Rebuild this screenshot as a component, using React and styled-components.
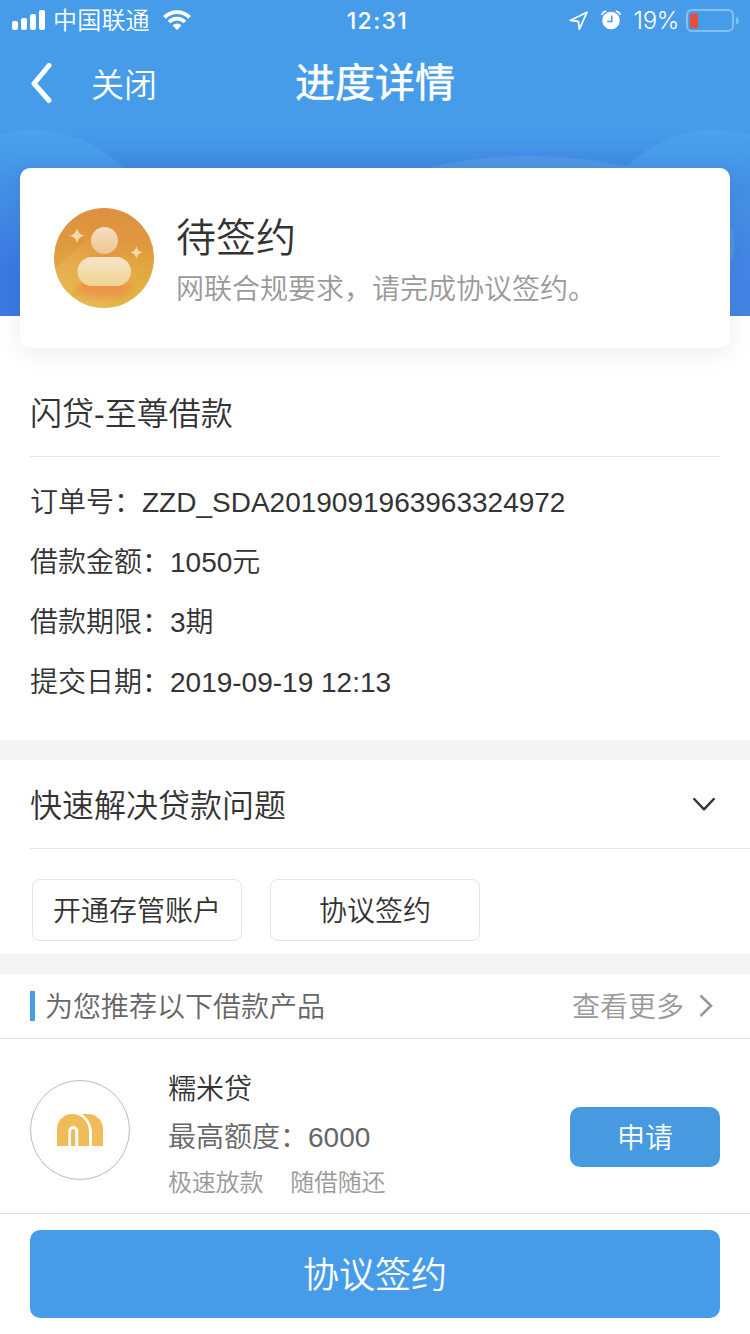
import React from "react";
import styled, { createGlobalStyle, css } from "styled-components";

const GlobalStyle = createGlobalStyle`
  * {
    box-sizing: border-box;
  }
  body {
    margin: 0;
    background: #fff;
    color: #333;
    font-family: "Liberation Sans", "Noto Sans CJK SC", sans-serif;
    font-weight: 350;
  }
  svg {
    display: block;
    flex: none;
  }
`;

const Page = styled.div`
  position: relative;
  display: flex;
  flex-direction: column;
  width: 750px;
  height: 1334px;
  overflow: hidden;
`;

const Backdrop = styled.svg`
  position: absolute;
  top: 0;
  left: 0;
  z-index: -1;
`;

const StatusBar = styled.div`
  display: grid;
  grid-template-columns: 1fr auto 1fr;
  align-items: center;
  height: 40px;
  padding: 0 11px 0 12px;
  color: #fff;
  font-family: Inter, "Noto Sans CJK SC", sans-serif;
`;

const StatusGroup = styled.div`
  display: flex;
  align-items: center;
  justify-content: ${props => (props.$end ? "flex-end" : "flex-start")};
`;

const Carrier = styled.span`
  font-size: 24px;
  line-height: 38px;
  letter-spacing: 0.2px;
  padding-top: 2px;
  margin: 0 13px 0 7px;
`;

const Clock = styled.span`
  font-size: 23px;
  font-weight: 500;
  letter-spacing: 1.4px;
  line-height: 38px;
  padding: 2px 0 0 4px;
`;

const Percent = styled.span`
  font-size: 24px;
  font-weight: 350;
  line-height: 38px;
  letter-spacing: -0.3px;
  padding-top: 2px;
  margin: 0 7px 0 13px;
`;

const NavBar = styled.div`
  display: grid;
  grid-template-columns: 1fr auto 1fr;
  align-items: center;
  height: 88px;
  padding: 0 30px;
  color: #fff;
`;

const NavLeft = styled.div`
  display: flex;
  align-items: center;
  gap: 38px;
  font-size: 33px;
  line-height: 80px;

  span {
    padding-top: 4px;
  }
`;

const Title = styled.div`
  font-size: 40px;
  font-weight: 400;
  line-height: 86px;
  height: 88px;
  -webkit-text-stroke: 0.5px #fff;
`;

const StatusCard = styled.div`
  display: flex;
  gap: 22px;
  height: 180px;
  margin: 40px 20px 0;
  padding: 40px 34px;
  border-radius: 10px;
  background: #fff;
  box-shadow: 0 4px 24px rgba(0, 0, 0, 0.08);
`;

const StatusText = styled.div`
  display: flex;
  flex-direction: column;
`;

const StatusTitle = styled.div`
  font-size: 40px;
  line-height: 61px;
`;

const StatusNote = styled.div`
  font-size: 28px;
  line-height: 42px;
  color: #999;
`;

const Loan = styled.div`
  height: 392px;
  padding: 20px 30px 0;
`;

const LoanName = styled.div`
  height: 89px;
  border-bottom: 1px solid #e3e3e3;
  font-size: 32px;
  line-height: 93px;
`;

const LoanInfo = styled.div`
  padding-top: 16px;
`;

const InfoRow = styled.div`
  display: flex;
  height: 60px;
  font-size: 28px;
  line-height: 60px;
`;

const Spacer = styled.div`
  height: 20px;
  background: #f4f4f4;
`;

const QuickHead = styled.div`
  display: flex;
  align-items: center;
  justify-content: space-between;
  height: 89px;
  margin-left: 30px;
  padding-right: 34px;
  border-bottom: 1px solid #e3e3e3;
  font-size: 32px;
  line-height: 40px;

  span {
    padding-top: 4px;
  }
`;

const QuickList = styled.div`
  display: flex;
  gap: 28px;
  height: 105px;
  padding: 30px 32px 0;
`;

const buttonReset = css`
  padding: 0;
  border: 0;
  font-family: inherit;
  font-weight: inherit;
`;

const QuickButton = styled.button`
  ${buttonReset}
  width: 210px;
  height: 62px;
  padding-bottom: 3px;
  border: 1px solid #e3e3e3;
  border-radius: 8px;
  background: #fff;
  color: #333;
  font-size: 28px;
`;

const RecommendHead = styled.div`
  display: flex;
  align-items: center;
  height: 65px;
  padding: 0 37px 0 30px;
  border-bottom: 1px solid #e0e0e0;
  font-size: 28px;
  line-height: 40px;
  color: #666;

  span {
    padding-top: 4px;
  }
`;

const Mark = styled.i`
  width: 5px;
  height: 30px;
  margin-right: 10px;
  background: #479de8;
`;

const More = styled.div`
  display: flex;
  align-items: center;
  gap: 15px;
  margin-left: auto;
  color: #999;
`;

const Product = styled.div`
  display: flex;
  align-items: center;
  height: 175px;
  padding: 0 30px;
  border-bottom: 1px solid #e0e0e0;
`;

const Logo = styled.div`
  display: flex;
  align-items: center;
  justify-content: center;
  width: 100px;
  height: 100px;
  margin-top: 8px;
  border: 1px solid #bbb;
  border-radius: 50%;
`;

const ProductText = styled.div`
  flex: 1;
  margin: 17px 0 0 38px;
`;

const ProductName = styled.div`
  font-size: 28px;
  line-height: 50px;
`;

const Quota = styled.div`
  font-size: 28px;
  line-height: 46px;
  color: #666;
`;

const Tags = styled.div`
  display: flex;
  gap: 27px;
  font-size: 24px;
  line-height: 44px;
  letter-spacing: -0.2px;
  color: #999;
`;

const ApplyButton = styled.button`
  ${buttonReset}
  width: 150px;
  height: 60px;
  margin-top: 22px;
  padding-bottom: 3px;
  border-radius: 10px;
  background: #479ae0;
  color: #fff;
  font-size: 28px;
`;

const Footer = styled.div`
  padding: 16px 30px;
`;

const SignButton = styled.button`
  ${buttonReset}
  width: 100%;
  height: 88px;
  padding-bottom: 5px;
  border-radius: 10px;
  background: #479cea;
  color: #fff;
  font-size: 36px;
`;

const HeaderBackdrop = () => (
  <Backdrop width="750" height="316" viewBox="0 0 750 316">
    <defs>
      <linearGradient id="sky" x1="0" y1="0" x2="0" y2="1">
        <stop offset="0" stopColor="#479cea" />
        <stop offset="0.41" stopColor="#479cea" />
        <stop offset="0.54" stopColor="#3f87e3" />
        <stop offset="0.8" stopColor="#3a7ae2" />
        <stop offset="1" stopColor="#3a7ae2" />
      </linearGradient>
      <linearGradient id="hill" x1="0" y1="0" x2="0" y2="1">
        <stop offset="0" stopColor="#4da5ee" stopOpacity="0.7" />
        <stop offset="0.35" stopColor="#4693e9" stopOpacity="0.5" />
        <stop offset="0.6" stopColor="#4088e6" stopOpacity="0" />
      </linearGradient>
      <linearGradient id="side" x1="0" y1="0" x2="1" y2="0">
        <stop offset="0.5" stopColor="#4488e4" stopOpacity="0" />
        <stop offset="1" stopColor="#4a8de5" stopOpacity="0.6" />
      </linearGradient>
    </defs>
    <rect width="750" height="316" fill="url(#sky)" />
    <rect y="200" width="750" height="116" fill="url(#side)" />
    <circle cx="33" cy="256" r="126" fill="url(#hill)" />
    <circle cx="715" cy="256" r="126" fill="url(#hill)" />
    <ellipse cx="530" cy="244" rx="205" ry="88" fill="#5b9fe8" fillOpacity="0.5" />
  </Backdrop>
);

const SignalIcon = () => (
  <svg width="34" height="20" viewBox="0 0 34 20" fill="#fff">
    <rect x="0" y="11" width="6" height="9" rx="2" />
    <rect x="9" y="8" width="6" height="12" rx="2" />
    <rect x="18" y="4" width="6" height="16" rx="2" />
    <rect x="27" y="0" width="6" height="20" rx="2" />
  </svg>
);

const WifiIcon = () => (
  <svg width="28" height="20" viewBox="0 0 28 20" fill="none" stroke="#fff" strokeWidth="3.8">
    <path d="M1.4 7.3a17.8 17.8 0 0 1 25.2 0" />
    <path d="M6 12a11.4 11.4 0 0 1 16 0" />
    <path d="M14 20l-4.5-4.6a6.4 6.4 0 0 1 9 0z" fill="#fff" stroke="none" />
  </svg>
);

const LocationIcon = styled(({ className }) => (
  <svg className={className} width="20" height="20" viewBox="0 0 20 20" fill="none" stroke="#fff" strokeWidth="1.7" strokeLinejoin="round">
    <path d="M18 2.2L1.2 10.4l8.200 1 .9 8z" />
  </svg>
))`
  margin-right: 12px;
`;

const AlarmIcon = () => (
  <svg width="20" height="20" viewBox="0 0 20 20" fill="none">
    <circle cx="10" cy="10.5" r="8.8" fill="#fff" />
    <path d="M10.8 5.5v6H6.2" stroke="#479cea" strokeWidth="1.5" />
    <path d="M1 4.2C1.6 2.5 2.8 1.6 4.5 1.4M19 4.2C18.4 2.5 17.2 1.6 15.5 1.4" stroke="#fff" strokeWidth="1.8" strokeLinecap="round" />
  </svg>
);

const BatteryIcon = () => (
  <svg width="53" height="23" viewBox="0 0 53 23">
    <rect x="1" y="1" width="46" height="21" rx="5" fill="none" stroke="#80c0f5" strokeWidth="2" />
    <rect x="4" y="4.5" width="8" height="14.5" rx="0.5" fill="#eb4d3d" />
    <path d="M50 8c4 1 4 6.5 0 7.5z" fill="#80c0f5" />
  </svg>
);

const BackIcon = () => (
  <svg width="23" height="42" viewBox="0 0 23 42" fill="none" stroke="#fff" strokeWidth="5" strokeLinecap="round" strokeLinejoin="round">
    <path d="M19 2.5L4 20.5l15 17" />
  </svg>
);

const PersonIcon = () => (
  <svg width="100" height="100" viewBox="0 0 100 100">
    <defs>
      <linearGradient id="disc" x1="0" y1="0" x2="0" y2="1">
        <stop offset="0" stopColor="#de9140" />
        <stop offset="0.35" stopColor="#e0983f" />
        <stop offset="0.75" stopColor="#e3ae43" />
        <stop offset="1" stopColor="#e4b943" />
      </linearGradient>
      <linearGradient id="head" x1="0" y1="0" x2="0" y2="1">
        <stop offset="0" stopColor="#f5dfc0" />
        <stop offset="1" stopColor="#edc593" />
      </linearGradient>
      <linearGradient id="torso" x1="0" y1="0" x2="0" y2="1">
        <stop offset="0" stopColor="#f7e3ca" />
        <stop offset="1" stopColor="#eed490" />
      </linearGradient>
      <linearGradient id="ray" x1="1" y1="0" x2="0" y2="1">
        <stop offset="0" stopColor="#edbd62" stopOpacity="0" />
        <stop offset="1" stopColor="#eabd62" stopOpacity="0.65" />
      </linearGradient>
      <filter id="soft" x="-40%" y="-100%" width="180%" height="300%">
        <feGaussianBlur stdDeviation="4.5" />
      </filter>
      <clipPath id="round">
        <circle cx="50" cy="50" r="50" />
      </clipPath>
    </defs>
    <g clipPath="url(#round)">
      <rect width="100" height="100" fill="url(#disc)" />
      <path d="M-8 68L38 28l22 18L8 94z" fill="url(#ray)" />
      <path d="M10 100L66 50q14-8 19 4 1 11-7 19L44 108z" fill="url(#ray)" />
      <ellipse cx="50" cy="81" rx="28" ry="9" fill="#ed8248" opacity="0.65" filter="url(#soft)" />
      <ellipse cx="51" cy="48" rx="13" ry="4" fill="#ec8240" opacity="0.6" filter="url(#soft)" />
      <circle cx="50.5" cy="32.5" r="13.5" fill="url(#head)" />
      <rect x="23.5" y="49" width="53.5" height="29" rx="14.5" fill="url(#torso)" />
      <path d="M23 20q1.2 6.8 8 7.8-6.8 1-8 7.2-1.2-6.2-8-7.2 6.8-1 8-7.8z" fill="#f6d9a8" />
      <path d="M82.5 38q1 5.5 6 6.5-5 1-6 6-1-5-6-6 5-1 6-6.5z" fill="#f6d9a8" />
    </g>
  </svg>
);

const ArrowDownIcon = () => (
  <svg width="24" height="16" viewBox="0 0 24 16" fill="none" stroke="#333" strokeWidth="2.4" strokeLinecap="round" strokeLinejoin="round">
    <path d="M2.2 3L12 13.3 21.8 3" />
  </svg>
);

const ArrowRightIcon = () => (
  <svg width="14" height="24" viewBox="0 0 14 24" fill="none" stroke="#999" strokeWidth="2.6">
    <path d="M1.5 1.5L12 11.8 1.5 22" />
  </svg>
);

const ArchIcon = () => (
  <svg width="46" height="32" viewBox="0 0 46 32" fill="#f1bb59">
    <path d="M0 32V15A15 15 0 0 1 15 0C25 0 32 8 32 18v14H21.3V17a5 5 0 0 0-10 0v15z" />
    <path d="M14 32V17.2a2.15 2.15 0 0 1 4.3 0V32z" />
    <path d="M25 0h6a15 15 0 0 1 15 15v17H35V19C35 11 31 4 25 0z" />
  </svg>
);

const loanInfo = [
  "订单号：ZZD_SDA2019091963963324972",
  "借款金额：1050元",
  "借款期限：3期",
  "提交日期：2019-09-19 12:13"
];

const App = () => (
  <>
    <GlobalStyle />
    <Page>
      <HeaderBackdrop />
      <StatusBar>
        <StatusGroup>
          <SignalIcon />
          <Carrier>中国联通</Carrier>
          <WifiIcon />
        </StatusGroup>
        <Clock>12:31</Clock>
        <StatusGroup $end>
          <LocationIcon />
          <AlarmIcon />
          <Percent>19%</Percent>
          <BatteryIcon />
        </StatusGroup>
      </StatusBar>
      <NavBar>
        <NavLeft>
          <BackIcon />
          <span>关闭</span>
        </NavLeft>
        <Title>进度详情</Title>
      </NavBar>
      <StatusCard>
        <PersonIcon />
        <StatusText>
          <StatusTitle>待签约</StatusTitle>
          <StatusNote>网联合规要求，请完成协议签约。</StatusNote>
        </StatusText>
      </StatusCard>
      <Loan>
        <LoanName>闪贷-至尊借款</LoanName>
        <LoanInfo>
          {loanInfo.map(text => (
            <InfoRow key={text}>{text}</InfoRow>
          ))}
        </LoanInfo>
      </Loan>
      <Spacer />
      <QuickHead>
        <span>快速解决贷款问题</span>
        <ArrowDownIcon />
      </QuickHead>
      <QuickList>
        <QuickButton>开通存管账户</QuickButton>
        <QuickButton>协议签约</QuickButton>
      </QuickList>
      <Spacer />
      <RecommendHead>
        <Mark />
        <span>为您推荐以下借款产品</span>
        <More>
          <span>查看更多</span>
          <ArrowRightIcon />
        </More>
      </RecommendHead>
      <Product>
        <Logo>
          <ArchIcon />
        </Logo>
        <ProductText>
          <ProductName>糯米贷</ProductName>
          <Quota>最高额度：6000</Quota>
          <Tags>
            <span>极速放款</span>
            <span>随借随还</span>
          </Tags>
        </ProductText>
        <ApplyButton>申请</ApplyButton>
      </Product>
      <Footer>
        <SignButton>协议签约</SignButton>
      </Footer>
    </Page>
  </>
);

export default App;
